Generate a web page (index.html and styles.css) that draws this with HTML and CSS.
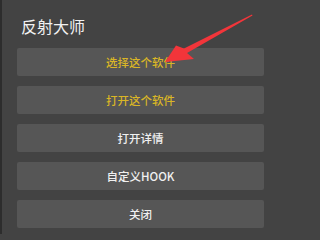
FILE: index.html
```html
<!DOCTYPE html>
<html>
<head>
<meta charset="utf-8">
<link rel="stylesheet" href="styles.css">
</head>
<body>
<div class="dialog">
  <div class="title">反射大师</div>
  <div class="buttons">
    <div class="btn accent">选择这个软件</div>
    <div class="btn accent">打开这个软件</div>
    <div class="btn">打开详情</div>
    <div class="btn">自定义HOOK</div>
    <div class="btn">关闭</div>
  </div>
  <svg class="arrow" width="278" height="80" viewBox="0 0 278 80">
    <polygon points="252,14.5 184,48.5 176,45.5 165,62 194,59 187,53 252.5,15.5" fill="#f2353a"/>
  </svg>
</div>
</body>
</html>
```
FILE: styles.css
```css
html {
  background: #434343;
}
body {
  margin: 0;
  padding: 0;
  background: #2d2d2d;
  width: 278px;
  height: 234px;
  overflow: hidden;
}
.dialog {
  position: relative;
  margin-left: 2px;
  height: 234px;
  background: #434343;
  padding: 0 14px 0 15px;
  box-sizing: border-box;
  font-family: "Noto Sans CJK SC", "Noto Sans", sans-serif;
}
.title {
  padding: 16px 0 0 4px;
  height: 20px;
  line-height: 20px;
  font-size: 16px;
  color: #f2f2f2;
  margin-bottom: 12px;
}
.buttons {
  display: flex;
  flex-direction: column;
  gap: 10px;
}
.btn {
  height: 28px;
  line-height: 28px;
  background: #565656;
  border-radius: 2px;
  text-align: center;
  font-size: 11.5px;
  font-weight: 500;
  color: #f0f0f0;
}
.btn.accent {
  color: #d9b526;
}
.arrow {
  position: absolute;
  left: -2px;
  top: 0;
}
```
